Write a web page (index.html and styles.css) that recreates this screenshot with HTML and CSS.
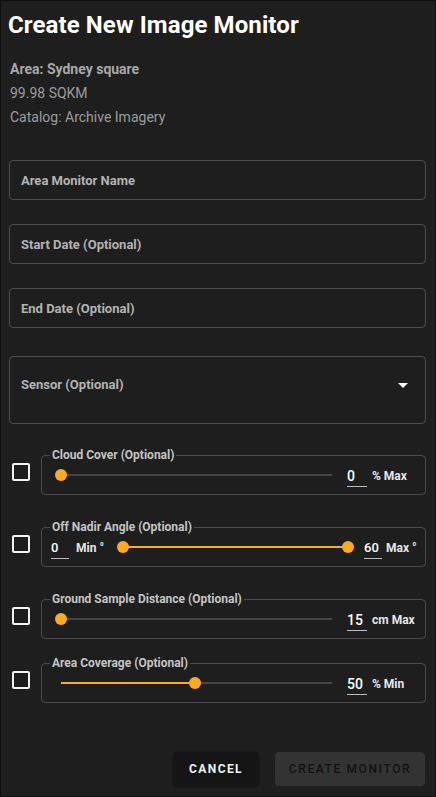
FILE: index.html
```html
<!DOCTYPE html>
<html>
<head>
<meta charset="utf-8">
<link rel="stylesheet" href="styles.css">
</head>
<body>
<div class="dialog">
  <h1 class="title">Create New Image Monitor</h1>
  <div class="info">
    <div class="info-line strong">Area: Sydney square</div>
    <div class="info-line">99.98 SQKM</div>
    <div class="info-line">Catalog: Archive Imagery</div>
  </div>
  <div class="field field-first"><span class="label">Area Monitor Name</span></div>
  <div class="field"><span class="label">Start Date (Optional)</span></div>
  <div class="field"><span class="label">End Date (Optional)</span></div>
  <div class="field select">
    <span class="label">Sensor (Optional)</span>
    <svg class="caret" width="10" height="5" viewBox="0 0 10 5"><path d="M0 0H10L5 5Z" fill="#fff"/></svg>
  </div>

  <div class="row row-first">
    <span class="check"></span>
    <fieldset class="group">
      <legend>Cloud Cover (Optional)</legend>
      <div class="slider-line">
        <div class="track"><div class="thumb" style="left:0%"></div></div>
        <span class="value">0</span>
        <span class="unit">% Max</span>
      </div>
    </fieldset>
  </div>

  <div class="row">
    <span class="check"></span>
    <fieldset class="group">
      <legend>Off Nadir Angle (Optional)</legend>
      <div class="slider-line nadir">
        <span class="value small first">0</span>
        <span class="unit min">Min °</span>
        <div class="track short"><div class="fill" style="left:0%;width:100%"></div><div class="thumb" style="left:0%"></div><div class="thumb" style="left:100%"></div></div>
        <span class="value small last">60</span>
        <span class="unit max">Max °</span>
      </div>
    </fieldset>
  </div>

  <div class="row">
    <span class="check"></span>
    <fieldset class="group">
      <legend>Ground Sample Distance (Optional)</legend>
      <div class="slider-line">
        <div class="track"><div class="thumb" style="left:0%"></div></div>
        <span class="value">15</span>
        <span class="unit">cm Max</span>
      </div>
    </fieldset>
  </div>

  <div class="row row-last">
    <span class="check"></span>
    <fieldset class="group">
      <legend>Area Coverage (Optional)</legend>
      <div class="slider-line">
        <div class="track"><div class="fill" style="left:0%;width:49.5%"></div><div class="thumb" style="left:49.5%"></div></div>
        <span class="value">50</span>
        <span class="unit">% Min</span>
      </div>
    </fieldset>
  </div>

  <div class="actions">
    <button class="btn cancel">CANCEL</button>
    <button class="btn create">CREATE MONITOR</button>
  </div>
</div>
</body>
</html>
```

FILE: styles.css
```css
* { box-sizing: border-box; }
html, body { margin: 0; padding: 0; background: #1e1e1e; }
body { font-family: Roboto, "Liberation Sans", sans-serif; color: #fff; }
.dialog {
  width: 436px;
  height: 797px;
  border: 1px solid #0e0e0e;
  background: #1e1e1e;
  padding: 0 9px 0 8px;
  display: flex;
  flex-direction: column;
}
.title {
  margin: 10px 0 0 -1px;
  font-size: 24px;
  line-height: 28px;
  font-weight: 700;
  color: #fff;
  letter-spacing: 0.1px;
}
.info { margin-top: 18px; padding-left: 1px; }
.info-line {
  font-size: 14px;
  line-height: 24px;
  color: #9c9c9c;
}
.info-line.strong { font-weight: 700; color: #a8a8a8; }
.field {
  height: 40px;
  margin-top: 24px;
  border: 1px solid #4d4d4d;
  border-radius: 4px;
  display: flex;
  align-items: center;
  padding-left: 11px;
}
.field-first { margin-top: 31px; }
.label { font-size: 13px; font-weight: 700; color: #b3b3b3; }
.select {
  height: 68px;
  margin-top: 28px;
  justify-content: space-between;
  padding-right: 17px;
  padding-bottom: 11px;
}
.caret { display: block; margin-top: 1px; }
.row {
  display: flex;
  align-items: center;
  margin-top: 25px;
}
.row-first { margin-top: 24px; }
.row-last { margin-top: 17px; }
.check {
  width: 18px;
  height: 18px;
  border: 2px solid #f2f2f2;
  border-radius: 2px;
  margin: 0 11px 0 3px;
  flex: none;
}
.group {
  flex: 1;
  margin: 0;
  border: 1px solid #4a4a4a;
  border-radius: 4px;
  padding: 0 0 0 8px;
  min-width: 0;
  height: 47px;
}
.group legend {
  font-size: 12px;
  font-weight: 700;
  color: #c4c4c4;
  padding: 0 2px;
  margin-left: 0;
  line-height: 14px;
}
.slider-line {
  display: flex;
  align-items: center;
  height: 26px;
  margin-left: 11px;
}
.track {
  position: relative;
  width: 271px;
  height: 2px;
  background: #454545;
  flex: none;
}
.fill { position: absolute; top: 0; height: 2px; background: #fbab1b; }
.thumb {
  position: absolute;
  top: 50%;
  width: 12px;
  height: 12px;
  margin: -6px 0 0 -6px;
  border-radius: 50%;
  background: #fbab1b;
}
.value {
  width: 20px;
  margin-left: 15px;
  padding-top: 5px;
  padding-bottom: 2px;
  border-bottom: 1px solid #bdbdbd;
  font-size: 14px;
  font-weight: 500;
  color: #fff;
  line-height: 16px;
}
.unit {
  margin-left: 5px;
  font-size: 12px;
  font-weight: 700;
  color: #e6e6e6;
  margin-top: 1px;
}
.nadir { margin-left: 1px; }
.value.small { width: 18px; font-size: 13px; padding-top: 4px; }
.value.first { margin-left: 0; }
.unit.min { margin-left: 7px; width: 47px; flex: none; }
.track.short { width: 225px; }
.value.last { margin-left: 16px; }
.unit.max { margin-left: 4px; }
.actions {
  margin-top: auto;
  margin-bottom: 10px;
  display: flex;
  justify-content: flex-end;
  gap: 16px;
}
.btn {
  border: none;
  border-radius: 4px;
  height: 34px;
  font-family: Roboto, "Liberation Sans", sans-serif;
  font-size: 12px;
  font-weight: 700;
  cursor: pointer;
}
.cancel {
  width: 86px;
  background: #151515;
  color: #f2f2f2;
  letter-spacing: 1.4px;
  box-shadow: 0 1px 3px rgba(0,0,0,0.5);
}
.create {
  width: 150px;
  background: #333333;
  color: #121212;
  letter-spacing: 1.6px;
  font-weight: 500;
  margin-right: 1px;
}
```
